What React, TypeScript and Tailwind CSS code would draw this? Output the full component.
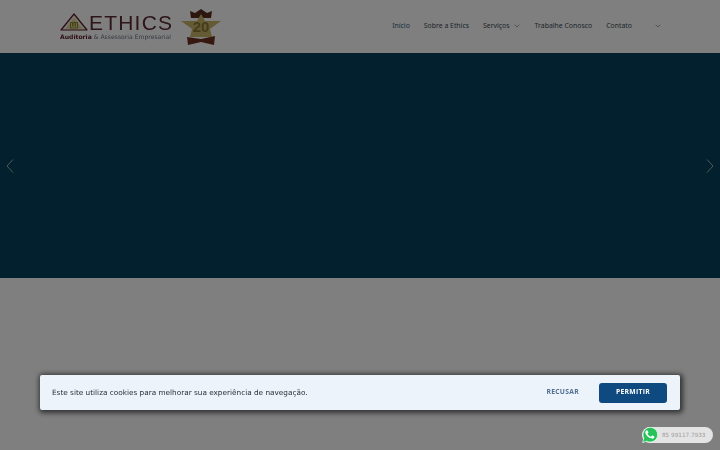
import { ChevronDown } from "lucide-react";

const navItems = [
  { label: "Início", className: "text-[#1f6080]", caret: false },
  { label: "Sobre a Ethics", className: "text-[#3c4a55]", caret: false },
  { label: "Serviços", className: "text-[#3c4a55]", caret: true },
  { label: "Trabalhe Conosco", className: "text-[#3c4a55]", caret: false },
  { label: "Contato", className: "text-[#3c4a55]", caret: false },
];

function LogoMark() {
  return (
    <svg width="28" height="18" viewBox="0 0 28 18" className="shrink-0">
      <path d="M14 1 L27 17 H1 Z" fill="#f0ead8" stroke="#5a1a25" strokeWidth="1.2" strokeLinejoin="round" />
      <path d="M14 5 L22 15.500 H6 Z" fill="#d8d0a0" />
      <rect x="10" y="9" width="8" height="6.500" fill="#8f8a30" />
      <path d="M11.500 10 v4 h5 v-4 M14 10 v4" fill="none" stroke="#f0e8a0" strokeWidth="0.8" />
    </svg>
  );
}

function Badge() {
  return (
    <svg width="40" height="38" viewBox="0 0 40 38" className="blur-[0.6px]">
      <path d="M9 3 L14 5 L20 1 L26 5 L31 3 L30 10 H10 Z" fill="#5a2c1c" />
      <path d="M20 6 L24 13 L40 13 L29 21 L31 29 H9 L11 21 L0 13 L16 13 Z" fill="#c9b66a" />
      <path d="M6 29 L20 31 L34 28 L33 37 L20 34 L7 37 Z" fill="#6e3020" />
      <text x="20" y="24" textAnchor="middle" fontFamily="'Liberation Sans', sans-serif" fontWeight="700" fontSize="15" fill="#8a7a30">
        20
      </text>
    </svg>
  );
}

function WhatsAppIcon() {
  return (
    <svg width="16" height="16" viewBox="0 0 24 24" className="shrink-0">
      <path d="M1 23.500 L2.800 16.800 A11 11 0 1 1 7.200 21.200 Z" fill="#25c35a" stroke="#fff" strokeWidth="1" />
      <path
        d="M8.600 6.600c-.3 0-.7.100-1 .5-.4.400-1.200 1.200-1.200 2.800 0 1.700 1.200 3.300 1.400 3.500.2.200 2.400 3.800 5.900 5.100 2.900 1.100 3.500.9 4.100.8.600-.1 2-.8 2.300-1.600.3-.8.3-1.500.2-1.600-.1-.2-.3-.2-.7-.4l-2.300-1.100c-.3-.1-.5-.2-.8.200l-1.100 1.300c-.2.200-.4.300-.8.100-.4-.2-1.500-.5-2.800-1.700-1-.9-1.700-2-1.900-2.400-.2-.4 0-.6.200-.8l.6-.7c.2-.2.200-.4.400-.6.100-.2.100-.5 0-.7L9.700 7.300c-.3-.7-.6-.7-.8-.7z"
        fill="#fff"
        transform="translate(-1.300 -1.500) scale(0.98)"
      />
    </svg>
  );
}

function Arrow({ flip }: { flip?: boolean }) {
  return (
    <svg width="8" height="14" viewBox="0 0 8 14" className={flip ? "rotate-180" : ""}>
      <path d="M7 0.500 L1 7 L7 13.500" fill="none" stroke="#a8b4a0" strokeWidth="1" />
    </svg>
  );
}

export default function App() {
  return (
    <div className="h-[450px] w-[720px] overflow-hidden bg-white font-['DejaVu_Sans',sans-serif]">
      <header className="flex h-[53px] items-center justify-between bg-white pl-[60px] pr-[58px]">
        <div className="flex items-center gap-[8px]">
          <div className="flex w-[113px] flex-col blur-[0.35px]">
            <div className="flex h-[18px] items-end">
              <LogoMark />
              <span className="ml-[1px] text-[21px] leading-[17px] tracking-[1.2px] text-[#5a2a35] font-['Liberation_Sans',sans-serif]">
                ETHICS
              </span>
            </div>
            <div className="mt-[2px] whitespace-nowrap text-[6.1px] leading-[8px] text-[#6a7480]">
              <span className="font-bold text-[#5a1a25]">Auditoria</span> &amp; Assessoria Empresarial
            </div>
          </div>
          <Badge />
        </div>
        <nav className="flex items-center font-['Noto_Sans',sans-serif] text-[6.9px]">
          {navItems.map((item) => (
            <a key={item.label} className={`mr-[14px] flex items-center whitespace-nowrap ${item.className}`}>
              {item.label}
              {item.caret && <ChevronDown className="ml-[3px] h-[8px] w-[8px]" strokeWidth={1.5} />}
            </a>
          ))}
          <ChevronDown className="ml-[8px] h-[8px] w-[8px] text-[#3c4a55]" strokeWidth={1.5} />
        </nav>
      </header>

      <section className="flex h-[225px] items-center justify-between bg-[#04415d] px-[6px]">
        <Arrow />
        <Arrow flip />
      </section>

      {/* dim layer from the cookie prompt */}
      <div className="fixed inset-0 bg-black/50" />

      <div className="fixed bottom-[40px] left-[40px] right-[40px] flex h-[35px] items-center justify-between rounded-[2px] bg-[#edf3fb] pl-[12px] pr-[13px] shadow-[1px_1px_5px_2px_rgba(0,0,0,0.6)]">
        <p className="pt-[1px] text-[7.3px] text-[#1f2933]">Este site utiliza cookies para melhorar sua experiência de navegação.</p>
        <div className="flex items-center gap-[20px]">
          <button className="font-['Open_Sans',sans-serif] text-[6.75px] font-bold tracking-[0.3px] text-[#4f6f91]">RECUSAR</button>
          <button className="flex h-[20px] w-[68px] items-center justify-center rounded-[3px] bg-[#0e4a80] font-['Open_Sans',sans-serif] text-[6.75px] font-bold tracking-[0.3px] text-white">
            PERMITIR
          </button>
        </div>
      </div>

      <div className="fixed bottom-[7px] right-[7px] flex h-[16px] w-[71px] items-center rounded-full bg-[#e4e4e4]">
        <WhatsAppIcon />
        <span className="ml-[4px] whitespace-nowrap text-[5.7px] text-[#9a9a9a]">85 99117.7933</span>
      </div>
    </div>
  );
}
